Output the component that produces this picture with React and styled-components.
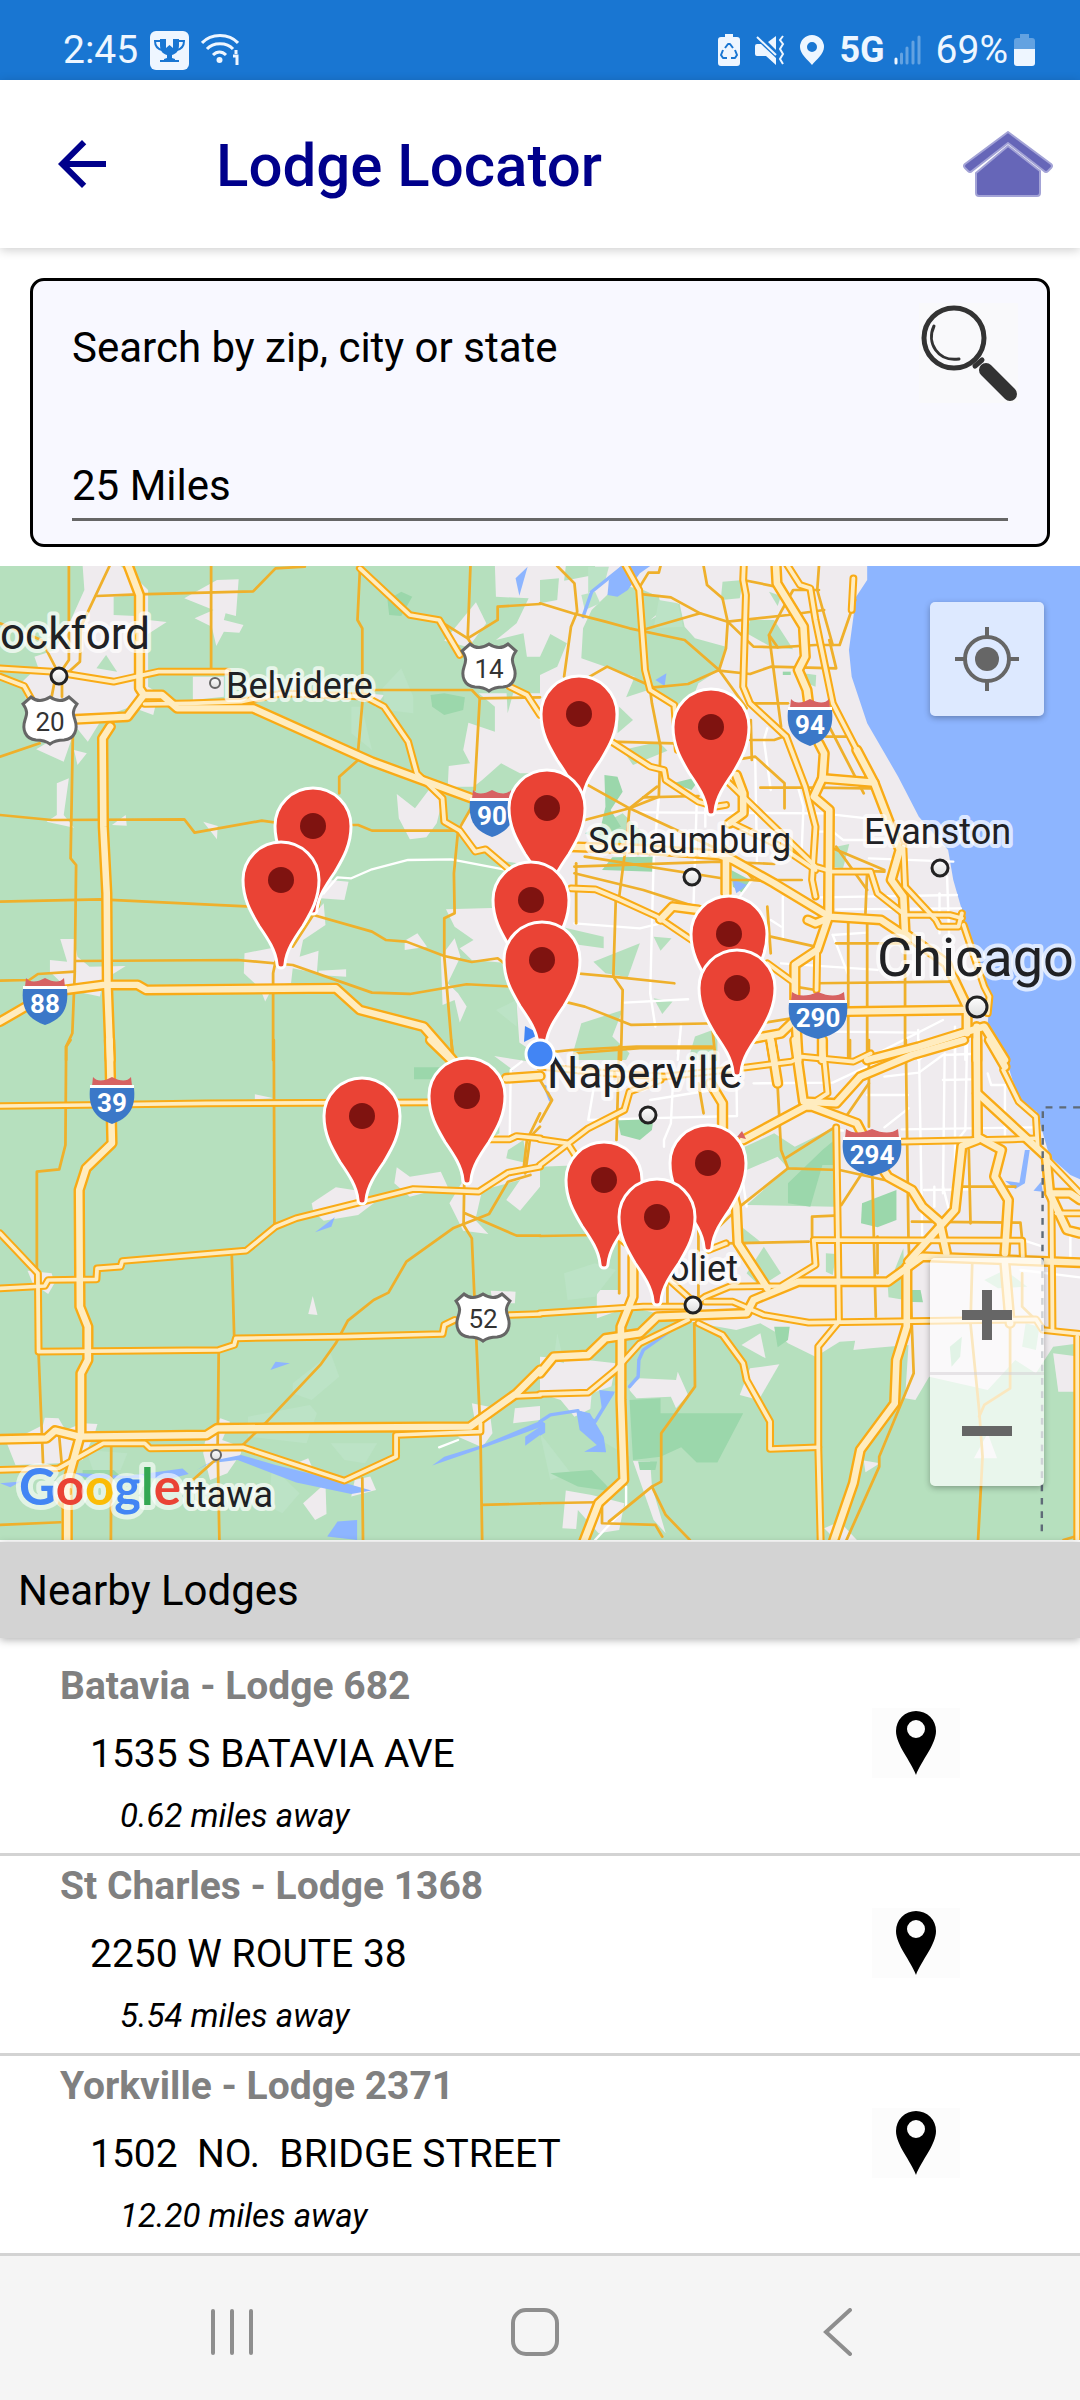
import React from 'react';
import styled, { createGlobalStyle } from 'styled-components';

const GlobalStyle = createGlobalStyle`
  * {
    box-sizing: border-box;
  }
  body {
    margin: 0;
    background: #fff;
    font-family: Roboto, 'Liberation Sans', sans-serif;
    color: #000;
  }
  button,
  input,
  select {
    font: inherit;
    color: inherit;
    margin: 0;
    padding: 0;
    border: 0;
    background: none;
  }
  svg {
    display: block;
  }
`;

const lodges = [
  { id: 682, name: 'Batavia - Lodge 682', street: '1535 S BATAVIA AVE', distance: '0.62 miles away' },
  { id: 1368, name: 'St Charles - Lodge 1368', street: '2250 W ROUTE 38', distance: '5.54 miles away' },
  { id: 2371, name: 'Yorkville - Lodge 2371', street: '1502  NO.  BRIDGE STREET', distance: '12.20 miles away' },
];

// Map geometry, one entry per tile. Points are in tile units.
const tiles = [
  {
    id: 'nw',
    x: 0,
    y: 0,
    urban: [
      '240,18 350,18 400,60 430,90 430,180 484,186 430,222 430,380 460,400 445,465 380,440 300,470 255,545 220,500 185,605 105,568 150,540 80,430 60,370 110,320 100,290 160,270 210,170 245,90',
      '535,115 630,60 693,58 685,168 655,160 650,180 707,195 695,218 650,215 628,258 615,200 565,175 620,150',
      '215,570 252,580 225,615', '165,670 200,655 185,765 215,803 135,785 165,765', '325,795 365,765 368,797', '590,785 632,798 630,838',
      '560,350 650,350 650,410 560,420', '1060,400 1115,405 1090,440',
      '1437,18 1568,18 1568,290 1530,290 1520,220 1440,240 1500,190 1535,115 1440,110', '1382,127 1412,190 1360,262 1290,242',
      '1390,400 1568,400 1568,640 1510,640 1455,610 1400,660 1375,680 1300,680 1303,618 1365,610 1345,570 1360,488 1437,515 1437,440',
      '1152,702 1205,745 1245,690 1285,720 1268,790 1238,832 1190,838 1158,775', '1380,740 1568,800 1568,920 1440,900 1370,850 1330,800',
      '935,958 1012,965 1000,1020 930,1015',
      '710,1180 860,1150 890,1085 940,1030 945,1095 880,1140 870,1190 925,1172 920,1240 850,1225 845,1270 795,1275 770,1325 755,1285 708,1240',
      '925,1232 1005,1228 1005,1250 925,1245', '1175,1142 1212,1120 1240,1160 1175,1170',
      '1295,1048 1568,1040 1568,1490 1508,1448 1500,1330 1480,1210 1370,1200 1335,1165 1375,1140 1320,1100',
      '1280,1190 1320,1135 1337,1190 1300,1270 1330,1300 1355,1340 1335,1388 1320,1320 1285,1335',
      '145,1200 195,1205 175,1137 215,1137 225,1190 260,1220 365,1218 300,1260 290,1310 200,1290 145,1235',
    ],
    park: ['330,110 395,105 395,168 330,165', '280,325 308,285 340,335', '1470,380 1490,400 1474,460'],
    wood: ['1250,405 1290,400 1350,412 1345,450 1290,465 1255,440', '1125,120 1165,95 1197,110 1165,168 1130,165'],
    light: ['1110,385 1165,325 1200,410 1200,460 1120,450', '1020,440 1050,440 1080,570 1020,520', '1440,1350 1500,1320 1500,1400'],
    water: ['1497,55 1532,20 1508,107'],
    street: ['940,1000 980,952 1020,955 1080,928 1185,900 1310,898 1470,930', '938,958 940,1000'],
    minor: [
      '200,18 200,300 180,330 180,410', '318,18 235,200 232,305 200,335', '0,190 120,240 165,330 150,410', '280,108 400,103 735,94 800,25 885,20',
      '613,18 613,330', '1045,30 1038,180 1052,205 1052,430 1040,570', '1040,600 985,650 985,700', '1366,18 1358,235 1445,180 1445,140 1568,132',
      '1280,185 1358,235 1375,262', '1085,390 1370,390 1393,415 1568,412', '1393,415 1378,690', '0,590 115,550',
      '0,765 150,780 535,778 565,818 760,782 850,795 1040,795 1080,812 1330,812', '212,500 205,895 221,915 217,1240 210,1420 192,1460 192,1500',
      '0,1025 290,1018 730,1040', '910,1065 1080,1115 1120,1140 1180,1145 1290,1188 1370,1206 1445,1195 1470,1215',
      '1370,740 1330,812 1318,940 1320,1060 1290,1075 1290,1190 1315,1500', '220,1203 690,1200 850,1215 1080,1298 1190,1302 1355,1273 1490,1280',
      '0,1262 85,1260 110,1242 217,1235', '800,1205 793,1240 793,1500', '930,1000 925,1040 850,1160',
    ],
    route: [
      '0,325 150,335 330,365 460,335 660,335', '420,432 550,430 700,425 820,400 1060,410 1115,440 1185,545 1210,640 1285,715 1290,785 1335,812 1380,875 1410,868 1475,925',
      '1045,25 1190,165 1275,180 1335,285', '1480,380 1530,405 1568,465', '0,350 70,378 95,425',
    ],
    highway: [
      '370,10 405,105 405,385 418,405 470,405 515,445 735,445 1080,605 1370,715', '418,405 370,470 220,478',
      '320,500 298,535 300,800 310,1000 312,1280 320,1500', '0,1385 100,1325 190,1290 300,1275 400,1275 425,1290 975,1285 1045,1350 1230,1400 1315,1500',
    ],
  },
  {
    id: 'ne',
    x: 540,
    y: 0,
    urban: ['0,0 1568,0 1568,1500 0,1500'],
    park: [
      '150,150 200,100 260,80 300,90 345,110 355,150 320,180 405,130 420,200 450,235 540,260 520,330 460,370 430,450 390,450 330,385 250,412 275,350 190,320 120,295 125,205',
      '0,60 55,55 50,120 0,130', '75,18 160,18 157,45 70,62', '30,222 78,250 50,320 0,345 0,290', '530,65 590,60 580,115 525,120',
      '610,180 680,180 735,268 670,260 600,220', '665,95 700,108 690,138', '230,440 270,480 225,520', '240,570 345,545 370,572 270,615',
      '860,860 898,852 880,925 840,920', '60,1100 185,1130 185,1165 80,1150', '155,1205 290,1150 255,1252 190,1240', '330,1130 382,1135 350,1172',
      '120,1390 240,1350 210,1430 260,1480 250,1500 90,1500', '450,1430 515,1405 515,1500 430,1500', '330,1315 385,1325 355,1362', '765,340 802,345 800,380 775,370',
      '130,820 240,760 340,860 240,870',
    ],
    wood: ['187,645 225,650 240,695 205,750 235,800 170,832 190,740', '210,892 330,890 330,935 180,930', '385,670 470,648 440,690', '555,930 610,960 590,1000 560,980', '705,335 728,335 728,345 705,345'],
    light: ['345,120 400,130 415,200 330,205', '120,105 160,95 175,130 130,150', '140,20 200,20 190,60 140,100'],
    water: [
      '950,18 1568,18 1568,1500 1360,1500 1300,1390 1307,1310 1250,1190 1225,1050 1200,960 1185,870 1100,770 1040,650 950,490 905,350 897,270 918,110 950,60',
      '200,60 235,18 320,18 290,40 255,90 225,110 196,105', '335,360 367,340 362,378', '558,958 602,975 570,1000',
    ],
    river: ['235,25 150,95 125,170'],
    street: [
      '660,505 650,540 670,690', '750,685 765,740 760,870', '280,757 820,760 950,775', '625,600 630,910', '345,710 330,900 320,1300 335,1400', '455,730 445,1060',
      '480,730 480,800', '100,1090 290,1105 350,1090', '245,1328 430,1318', '410,1390 400,1500', '800,815 850,815 880,840 1000,840', '955,895 1200,905',
      '810,1012 1210,1005', '860,1048 1222,1045', '1160,1000 1160,1120', '1182,950 1188,1130', '850,1125 950,1118', '850,1125 895,1245', '700,1210 980,1230',
      '980,1480 1170,1380', '830,1415 1100,1418', '1098,1410 1098,1500', '705,1010 705,1140', '615,960 580,1010', '670,1080 700,1100', '1205,1400 1205,1500',
      '1235,1400 1235,1500', '1170,1440 1100,1500',
    ],
    minor: [
      '50,18 100,70 108,155 90,200 70,350', '0,130 95,160 190,185 260,205 420,240 520,330 600,445', '290,212 465,160 380,112 300,103', '465,160 545,185 720,165 825,150',
      '350,18 345,38 315,38 290,80', '475,18 485,75 530,115 545,185 540,265 520,330', '520,332 610,342 670,320 860,325 840,240', '110,370 195,320 330,382 430,372 520,330',
      '545,185 620,260 690,262 800,255 870,255 915,120', '690,262 665,225 700,155 735,90 810,90', '665,225 700,500', '810,18 805,90 850,255',
      '320,390 325,430 350,560 345,710 260,745', '200,545 390,550', '610,430 720,430', '610,540 680,540 720,525', '575,598 625,590 710,670 710,745', '612,480 615,600',
      '590,60 710,85', '130,670 260,745 510,865', '130,780 260,745 340,680', '300,712 460,708', '640,683 800,683 960,685', '840,500 940,700', '830,530 890,530',
      '100,920 520,905 680,912', '100,940 300,990 450,1040', '230,1010 250,850 260,745', '105,910 105,1090', '220,1020 213,1250 240,1290 235,1500', '0,1230 210,1250 390,1270',
      '70,1325 130,1340 265,1395 520,1390', '100,1480 290,1465 500,1465', '500,1400 510,1500', '130,890 560,960 760,960', '530,850 620,960 700,970', '860,860 950,990',
      '950,930 945,1060', '800,1270 1200,1265', '895,1090 895,1500', '950,1080 950,1500', '1060,1150 1060,1500', '670,1130 800,1160', '860,1150 1120,1150', '740,1280 800,1290',
      '640,1390 760,1370', '660,1040 670,1180', '850,865 1000,930', '1000,935 850,930',
    ],
    route: [
      '245,10 288,90 305,330 320,390 390,435 400,570', '592,10 590,60 598,105 590,380 610,430 715,530 770,680 800,800 790,960 800,1010', '715,10 755,75 785,85 800,180 850,430 920,570',
      '910,55 905,150', '200,540 320,620 360,630 365,660 460,725 510,740 540,735', '540,660 620,740 800,920 850,935 960,935 980,1000 1060,1065 1190,1065 1225,1075',
      '90,985 160,988 230,1018 340,1070 440,1140', '560,790 700,860 800,930', '660,1210 740,1270', '1055,860 1060,980 1150,1080 1160,1100 1215,1100 1225,1060', '805,1160 803,1290',
      '1230,1095 1290,1280 1305,1310 1300,1360',
    ],
    highway: [
      '685,10 688,70 765,200 770,290 750,330 775,390 780,430', '810,550 825,580 820,655 795,710 840,750 838,1070 805,1170 740,1215 740,1330 750,1500', '820,655 970,668 920,570',
      '970,668 1045,870 1020,960 1055,1010 1060,1120 1180,1210 1240,1340 1240,1420', '85,860 300,868 520,885 560,900 680,970 840,1070 990,1080 1070,1135', '540,890 540,1000',
      '350,1078 385,1040 460,1050', '778,1080 800,1090 835,1075', '570,645 590,700 590,760 550,790', '895,1355 1230,1350', '600,1440 700,1420 740,1380',
      '950,1500 1100,1460 1240,1415 1290,1400 1350,1500', '1268,1400 1268,1500', '670,1440 680,1500', '820,1440 820,1500',
    ],
  },
  {
    id: 'sw',
    x: 0,
    y: 480,
    urban: [
      '905,490 975,442 1060,455 1085,490 1040,525 940,542 910,515', '1152,382 1190,410 1280,395 1300,440 1190,470 1145,430',
      '1305,490 1340,430 1330,330 1420,300 1450,280 1450,130 1490,90 1435,48 1568,70 1568,440 1510,512 1470,480 1510,420 1400,450 1380,540 1418,582 1345,572',
      '895,822 908,768 922,825', '1425,752 1497,755 1495,790 1430,790', '740,163 795,175 740,178', '80,692 150,700 158,730 140,762 95,730',
      '20,1210 125,1155 130,1133 170,1135 190,1170 240,1150 283,1152 275,1180 240,1260 170,1270 45,1275',
      '595,1205 640,1135 668,1145 645,1200 700,1220 700,1240 660,1300 610,1320 590,1240', '880,1390 945,1330 948,1422 915,1440', '860,1270 895,1255 910,1290 870,1290',
      '1030,1320 1075,1310 1092,1350 1020,1370', '1370,1090 1420,1100 1430,1180 1400,1222 1330,1190 1380,1150', '1495,1105 1568,1098 1568,1140 1490,1150',
    ],
    park: ['1475,330 1520,300 1530,370 1470,355'],
    wood: ['1202,82 1300,82 1280,118 1202,118', '240,1290 330,1290 360,1318 240,1320'],
    light: ['850,1030 960,940 985,1010 905,1080 850,1060', '720,1130 900,1095 920,1120 890,1210 720,1190', '250,1230 370,1240 350,1290 270,1290', '790,1280 870,1360 820,1420 780,1400', '960,1210 1095,1210 1060,1270 1000,1260'],
    water: [
      '785,990 800,965 842,970', '915,577 972,532 962,560', '620,1262 700,1245 800,1275 930,1308 1078,1352 1020,1362 860,1328 690,1260 610,1270 570,1290',
      '1255,1277 1290,1250 1400,1215 1568,1143 1568,1162 1400,1225', '1525,1190 1568,1160 1568,1185 1525,1217', '980,1445 1037,1440 1037,1500 950,1490',
      '200,1298 370,1308 530,1286 548,1302 500,1315 260,1315', '0,1330 60,1325 30,1342',
    ],
    street: ['1515,65 1483,90 1480,290', '1275,1222 1330,1200'],
    minor: [
      '205,0 192,20 190,315 172,388 107,395 107,690', '795,0 797,550', '1310,0 1315,40', '673,645 680,890', '112,940 125,1270', '635,940 632,1220 637,1500',
      '1540,405 1475,425 1420,522 1315,565 1180,665 1128,758 1085,780 1010,842 975,910 930,975 770,1150 705,1215', '560,1320 625,1260',
      '1348,430 1346,555 1370,595 1395,1180 1400,1500', '1350,520 1500,587 1568,587', '1052,1315 1054,1500', '323,1210 322,1500', '0,1455 175,1447', '1400,1395 1568,1390',
      '172,1190 180,1280', '1568,220 1530,300 1520,390', '1568,260 1540,290 1525,400', '140,1350 195,1420',
    ],
    route: [
      '0,198 250,195 600,190 1250,187', '0,745 130,738 140,720 280,718 282,685 350,680 355,663 715,632 800,560 860,535 1200,447 1390,455 1475,398 1568,380',
      '0,580 110,700 112,935 635,930 680,915 685,895 1000,890 1285,882 1290,855 1320,840', '1480,825 1568,822', '1410,298 1480,298 1500,288 1568,295',
      '0,1290 170,1285 300,1210 420,1210 435,1225 705,1222 1000,1322 1150,1250 1150,1185 1395,1175 1395,1150', '1500,1068 1568,1065',
    ],
    highway: [
      '318,0 325,310 250,385 230,450 232,800 255,860 255,960 235,1000 235,1180 195,1330 195,1510', '0,1198 135,1195 160,1172 230,1190 600,1185 630,1165 1365,1160 1500,1060 1568,990',
      '1250,0 1310,60', '1470,115 1568,108',
    ],
  },
  {
    id: 'se',
    x: 540,
    y: 480,
    urban: [
      '0,40 1568,40 1568,910 1490,920 1440,1000 1380,960 1300,1050 1130,1010 1090,1080 1060,1075 1070,915 960,925 910,930 915,902 870,905 800,950 720,910 690,880 640,850 570,870 460,850 260,800 165,835 165,750 230,750 230,560 180,560 90,480 130,375 0,380',
      '585,915 640,880 655,955', '0,950 155,962 220,970 200,1080 100,1130 60,1080 0,1060', '255,1045 290,1015 395,1020 400,995 430,1065 395,1105 380,1070 280,1075',
      '270,1263 320,1265 325,1340 365,1480 330,1440', '75,1352 150,1365 245,1390 230,1470 170,1480 110,1410 105,1467 65,1465', '695,973 635,1080 580,1065 610,985',
      '825,1465 870,1445 920,1500 860,1500', '940,1262 987,1270 945,1297', '1260,1255 1300,1180 1327,1255', '1490,940 1568,950 1568,1055 1505,1055',
    ],
    park: [
      '600,495 720,385 690,350 600,390 595,320 680,280 740,320 855,262 855,500', '830,640 860,642 850,705 830,695', '1010,740 1055,625 1060,780 1012,772', '1290,720 1350,690 1415,740 1330,745',
      '585,560 640,605 590,615', '0,480 70,480 160,560 230,640 220,750 60,750 0,760', '650,620 700,700 640,740 600,700', '1410,850 1450,860 1440,930 1400,920',
    ],
    light: ['70,700 160,670 220,690 160,770 80,780', '150,1060 260,1020 260,1250 140,1180', '0,1180 90,1300 30,1320', '50,880 70,970 40,960'],
    wood: [
      '225,240 330,232 325,270 290,300 235,285', '720,430 820,330 855,300 855,375 820,375 785,500 720,490', '935,490 1035,450 1035,540 980,562 932,550', '1055,750 1105,750 1112,787 1055,785',
      '680,860 725,860 720,900 690,922', '260,1080 350,1075 350,1120 590,1120 515,1268 455,1268 410,1222 350,1250 270,1260', '30,1300 150,1290 210,1355 110,1340',
      '285,1265 340,1265 335,1290 290,1290', '1190,920 1225,890 1220,950 1195,980',
    ],
    water: [
      '1330,0 1568,0 1568,418 1540,405 1480,350 1442,215 1390,180 1360,80', '1408,330 1422,330 1408,430 1380,447 1350,422 1392,428', '1433,452 1455,425 1460,455',
      '105,1110 145,1120 185,1190 192,1237 128,1235 165,1215 115,1170', '172,1050 218,1055 180,1110', '0,1140 15,1150 15,1178 0,1187',
    ],
    river: ['415,845 300,930 287,960 285,1010 260,1040', '0,1145 30,1125 110,1112', '120,1120 160,1145 210,1060', '15,140 30,180'],
    street: [
      '570,100 572,228 300,235 140,240 155,150', '388,90 380,250 360,300 360,320', '320,180 500,150', '620,130 850,128 990,60', '950,165 1068,165', '1070,205 1000,262', '1100,0 1110,600',
      '1175,40 1170,460', '1145,440 1145,500', '1170,440 1190,520', '1205,20 1205,420', '1240,0 1235,270 1205,310', '1050,268 1440,262', '1115,450 1250,448', '1170,120 1250,118', '1300,100 1310,135 1350,135 1350,300', '590,430 600,500',
      '1400,600 1460,620', '1395,690 1568,712', '250,1340 250,1400 160,1500', '1000,110 1100,98 1170,45 1250,42', '405,0 400,40', '1540,590 1540,650', '860,270 880,272',
    ],
    minor: [
      '0,40 90,30 280,20 500,20', '230,20 222,300', '0,588 165,585', '460,130 475,220', '690,140 700,330 720,385 870,390 1000,420', '720,385 580,500 490,590', '712,355 855,262',
      '900,0 900,50', '955,0 955,260', '965,410 975,830', '1062,0 1070,600 1085,1000 985,1250 985,1280 890,1500', '935,400 875,495', '1080,545 1395,548 1400,600', '855,527 790,530 790,590',
      '540,610 780,605', '460,570 460,780', '370,730 370,790', '1245,330 1250,550', '1255,670 1250,850 1275,1110 1285,1250 1272,1500', '1400,700 1400,800 1440,840',
      '1275,1130 1290,1095 1365,1045 1365,860', '448,850 450,1040 352,1180 352,1325 325,1340 200,1445', '180,1400 180,1450 335,1455 355,1490', '325,1340 365,1425 435,1500', '0,1390 165,1387', '0,120 35,180 0,245', '230,500 230,760',
      '955,130 885,235', '1210,440 1380,440', '1520,1500 1568,1485', '980,590 980,700',
    ],
    route: [
      '0,80 200,100 360,110 540,90 730,65 760,50 910,65 960,40', '0,375 140,265 245,210 260,155 350,120', '0,298 80,310 105,350', '820,0 835,160 790,190',
      '860,262 865,600 868,845 808,920 808,1220 815,1510', '460,850 530,885 590,970 600,1020 668,1145 668,1227 808,1222', '0,820 300,800 440,800 480,770 550,740 700,738 800,675 795,600 1400,602 1402,650',
      '480,785 560,785 650,825 780,848 1440,838 1460,870 1568,882', '1485,460 1488,870', '1050,305 1370,298 1440,295', '225,590 300,650 440,780', '490,630 540,610',
      '1475,360 1568,460', '1345,90 1390,185 1440,230 1445,320', '0,1062 140,1058 220,990 290,910 430,840', '1560,890 1560,1510', '1500,520 1568,520',
    ],
    highway: [
      '495,130 530,190 530,330 570,500 575,610 660,745', '670,0 690,130', '740,0 765,185 860,190 930,110 1080,45 1230,0',
      '590,300 770,200 790,200 920,250 960,330 1010,410 1080,450 1110,500 1160,545 1180,640', '1268,0 1270,290 1340,330 1320,410 1360,480 1350,640', '1270,300 1225,318 1205,510 1070,665',
      '1270,160 1470,350 1480,460 1530,570 1568,580', '1305,0 1350,80', '1480,460 1540,460 1568,480', '0,1000 40,950 140,945 190,895 290,880 340,830 600,820 620,780 750,725 1010,725 1110,650 1568,668',
      '1065,680 1065,860 1035,960 1030,1090 930,1230 910,1330 850,1510', '270,650 270,770 235,860 235,1080 243,1320 170,1390 125,1510', '1350,670 1365,850',
    ],
    border: ['1568,202 1460,202 1457,1480'],
  },
];

const areaLayers = [
  { key: 'urban', fill: '#efebee' },
  { key: 'park', fill: '#b6e0be' },
  { key: 'light', fill: '#bce3c6' },
  { key: 'wood', fill: '#9bd7ab' },
  { key: 'water', fill: '#8db5ff' },
];

const lineLayers = [
  { key: 'river', stroke: '#8db5ff', width: 10 },
  { key: 'street', stroke: '#ffffff', width: 7 },
  { key: 'minor', stroke: '#efb02b', width: 8 },
  { key: 'route', stroke: '#f9ab16', width: 23 },
  { key: 'highway', stroke: '#f9ab16', width: 33 },
  { key: 'route', stroke: '#ffecbf', width: 11 },
  { key: 'highway', stroke: '#ffecbf', width: 19 },
  { key: 'border', stroke: '#5f6b78', width: 7, dash: '20 20' },
];

const places = [
  { name: 'ockford', x: 0, y: 89, size: 44, dot: [59, 116, 8] },
  { name: 'Belvidere', x: 226, y: 138, size: 36, dot: [215, 123, 5] },
  { name: 'Schaumburg', x: 588, y: 293, size: 36, dot: [692, 317, 8] },
  { name: 'Evanston', x: 864, y: 284, size: 36, dot: [940, 308, 8] },
  { name: 'Chicago', x: 877, y: 416, size: 54, dot: [977, 447, 10] },
  { name: 'Naperville', x: 547, y: 528, size: 44, dot: [648, 555, 8] },
  { name: 'Joliet', x: 738, y: 721, size: 36, anchor: 'end', dot: [693, 745, 8] },
  { name: 'ttawa', x: 273, y: 947, size: 36, anchor: 'end', dot: [216, 895, 5] },
];

const interstates = [
  { label: '88', x: 45, y: 417, wide: 0 },
  { label: '39', x: 112, y: 516, wide: 0 },
  { label: '90', x: 492, y: 229, wide: 0 },
  { label: '94', x: 810, y: 138, wide: 0 },
  { label: '290', x: 818, y: 431, wide: 7 },
  { label: '294', x: 872, y: 568, wide: 7 },
];

const usRoutes = [
  { label: '20', x: 50, y: 135 },
  { label: '14', x: 489, y: 82 },
  { label: '52', x: 483, y: 732 },
];

const markers = [
  [579, 154], [711, 167], [547, 248], [313, 266], [281, 320], [531, 340], [729, 374],
  [542, 400], [737, 428], [467, 536], [362, 556], [708, 603], [604, 620], [657, 657],
];

const Screen = styled.div`
  min-height: 100vh;
  display: flex;
  flex-direction: column;
  background: #fff;
`;

const StatusBar = styled.div`
  height: 80px;
  padding: 20px 45px 0 63px;
  display: flex;
  align-items: center;
  justify-content: space-between;
  background: #1976d2;
  color: #eef6ff;
`;

const StatusGroup = styled.div`
  display: flex;
  align-items: center;
  gap: ${(props) => props.$gap}px;
`;

const StatusText = styled.span`
  font-size: ${(props) => (props.$bold ? 36 : 39)}px;
  font-weight: ${(props) => (props.$bold ? 700 : 400)};
  line-height: 40px;
`;

const Header = styled.header`
  position: relative;
  z-index: 1;
  height: 168px;
  padding: 0 27px 0 46px;
  display: flex;
  align-items: center;
  background: #fff;
  box-shadow: 0 2px 10px rgba(0, 0, 0, 0.2);
`;

const IconButton = styled.button`
  display: flex;
  align-items: center;
  justify-content: center;
  cursor: pointer;
`;

const Title = styled.h1`
  flex: 1;
  margin: 0 0 0 98px;
  padding-top: 4px;
  font-size: 60px;
  line-height: 72px;
  font-weight: 500;
  color: #00008b;
`;

const SearchPanel = styled.form`
  margin: 30px 30px 19px;
  padding: 22px 29px 23px;
  padding-left: 39px;
  border: 3px solid #000;
  border-radius: 14px;
  background: #f8f8ff;
  font-size: 42px;
`;

const SearchRow = styled.div`
  display: flex;
  align-items: flex-start;
  margin-bottom: 47px;
`;

const SearchInput = styled.input`
  flex: 1;
  min-width: 0;
  height: 88px;
  outline: none;
  &::placeholder {
    color: #000;
    opacity: 1;
  }
`;

const RadiusSelect = styled.select`
  display: block;
  width: calc(100% - 10px);
  height: 71px;
  padding-top: 2px;
  appearance: none;
  border-bottom: 3px solid #666;
  border-radius: 0;
  outline: none;
`;

const MapArea = styled.section`
  position: relative;
  aspect-ratio: 1080 / 974;
  margin-bottom: 2px;
  overflow: hidden;
  background: #b6e0be;
`;

const MapCanvas = styled.svg`
  width: 100%;
  height: 100%;
`;

const MapControls = styled.div`
  position: absolute;
  right: 36px;
  ${(props) => (props.$bottom ? 'bottom: 54px;' : 'top: 36px;')}
  border-radius: 5px;
  overflow: hidden;
  background: rgba(255, 255, 255, 0.7);
  box-shadow: 0 2px 6px rgba(0, 0, 0, 0.3);
`;

const MapButton = styled(IconButton)`
  width: 114px;
  height: 114px;
  & + & {
    border-top: 3px solid rgba(210, 205, 210, 0.5);
  }
`;

const ListHeader = styled.h2`
  position: relative;
  margin: 0;
  padding: 24px 18px 22px;
  font-size: 42px;
  line-height: 50px;
  font-weight: 400;
  background: #d3d3d3;
  box-shadow: 0 2px 8px rgba(0, 0, 0, 0.3);
`;

const LodgeList = styled.ul`
  margin: 0;
  padding: 18px 0 0;
  list-style: none;
`;

const LodgeRow = styled.li`
  display: flex;
  align-items: flex-start;
  padding: 6px 120px 19px 60px;
  border-bottom: 3px solid #d3d3d3;
`;

const LodgeInfo = styled.div`
  flex: 1;
  display: grid;
  gap: 20px;
`;

const LodgeName = styled.h3`
  margin: 0;
  font-size: 39px;
  line-height: 48px;
  font-weight: 700;
  color: #808080;
`;

const LodgeStreet = styled.div`
  padding-left: 30px;
  font-size: 39px;
  line-height: 48px;
  white-space: pre-wrap;
`;

const LodgeDistance = styled.div`
  padding-left: 60px;
  font-size: 33px;
  line-height: 36px;
  font-style: italic;
`;

const PinButton = styled(IconButton)`
  width: 88px;
  height: 70px;
  margin-top: 46px;
  background: #fcfcfc;
`;

const NavBar = styled.nav`
  flex: 1;
  min-height: 144px;
  padding: 8px 90px 0 80px;
  display: grid;
  grid-template-columns: repeat(3, 1fr);
  align-items: center;
  background: #f5f5f5;
`;

function InterstateShield({ label, x, y, wide }) {
  const w = 22 + wide;
  return (
    <g transform={`translate(${x} ${y})`}>
      <path d={`M${-w + 2} 10 L${-w + 3} 1 Q${-w / 2 - 2} 8 0 1 Q${w / 2 + 2} 8 ${w - 3} 1 L${w - 2} 10Z`} fill="#d76262" />
      <path d={`M${-w} 9h${2 * w}v4h${-2 * w}z`} fill="#fff" />
      <path d={`M${-w} 12H${w}C${w + 2} 32 ${w - 5} 42 0 48C${5 - w} 42 ${-w - 2} 32 ${-w} 12Z`} fill="#3b78c8" />
      <text x="0" y="36" textAnchor="middle" fontSize="26" fontWeight="700" fill="#fff">{label}</text>
    </g>
  );
}

function RouteShield({ label, x, y }) {
  return (
    <g transform={`translate(${x} ${y})`}>
      <path
        d="M-19 2C-13 7 -6 6 0 2C6 6 13 7 19 2L27 9C22 16 23 19 25 25C28 34 25 44 14 45C8 45 4 46 0 49C-4 46 -8 45 -14 45C-25 44 -28 34 -25 25C-23 19 -22 16 -27 9Z"
        fill="#fff"
        stroke="#666"
        strokeWidth="3"
      />
      <text x="0" y="36" textAnchor="middle" fontSize="26" fill="#333">{label}</text>
    </g>
  );
}

function Marker({ x, y }) {
  return (
    <g transform={`translate(${x} ${y})`}>
      <path
        d="M-4 84C-5 71 -13 59 -22 46C-29 34 -38 20 -38 0A38 38 0 0 1 38 0C38 20 29 34 22 46C13 59 5 71 4 84A4 4 0 0 1 -4 84Z"
        fill="#ea4335"
        stroke="#fff"
        strokeWidth="3"
      />
      <circle r="13" fill="#7f1310" />
    </g>
  );
}

function LodgeMap() {
  const place = (tile) => `translate(${tile.x} ${tile.y}) scale(0.3444 0.3333)`;
  return (
    <MapCanvas viewBox="0 6 1080 974" preserveAspectRatio="xMidYMid slice" role="img" aria-label="Map of nearby lodges">
      <defs>
        <linearGradient id="town" x1="0" y1="0" x2="0" y2="1">
          <stop offset="0" stopColor="#fff" />
          <stop offset="1" stopColor="#ddd" />
        </linearGradient>
      </defs>
      {areaLayers.map((layer) => (
        <g key={layer.key} fill={layer.fill}>
          {tiles.map((tile) => (
            <g key={tile.id} transform={place(tile)}>
              {(tile[layer.key] || []).map((points) => <polygon key={points} points={points} />)}
            </g>
          ))}
        </g>
      ))}
      {lineLayers.map((layer) => (
        <g
          key={layer.key + layer.width}
          fill="none"
          stroke={layer.stroke}
          strokeWidth={layer.width}
          strokeDasharray={layer.dash}
          strokeLinejoin="round"
          strokeLinecap={layer.dash ? 'butt' : 'round'}
        >
          {tiles.map((tile) => (
            <g key={tile.id} transform={place(tile)}>
              {(tile[layer.key] || []).map((points) => <polyline key={points} points={points} />)}
            </g>
          ))}
        </g>
      ))}
      <path d="M737 577l5 -6 4 8z" fill="#d76262" />
      {interstates.map((shield) => <InterstateShield key={shield.label} {...shield} />)}
      {usRoutes.map((shield) => <RouteShield key={shield.label} {...shield} />)}
      {places.map(({ name, x, y, size, anchor, dot }) => (
        <g key={name}>
          <text
            x={x}
            y={y}
            fontSize={size}
            textAnchor={anchor}
            fill="#202124"
            stroke="#fff"
            strokeOpacity="0.7"
            strokeWidth="8"
            strokeLinejoin="round"
            paintOrder="stroke"
          >
            {name}
          </text>
          <circle cx={dot[0]} cy={dot[1]} r={dot[2]} fill="url(#town)" stroke={dot[2] < 8 ? '#666' : '#222'} strokeWidth={dot[2] < 8 ? 2 : 3} />
        </g>
      ))}
      <path d="M525 466L540 474L524 482Z" fill="#4285f4" />
      {markers.map(([x, y]) => <Marker key={`${x}-${y}`} x={x} y={y} />)}
      <circle cx="540" cy="494" r="14" fill="#4285f4" stroke="#fff" strokeWidth="3" />
      <text
        x="19"
        y="945"
        fontFamily="Lato, sans-serif"
        fontSize="51"
        fontWeight="700"
        stroke="#fff"
        strokeOpacity="0.6"
        strokeWidth="10"
        strokeLinejoin="round"
        paintOrder="stroke"
      >
        <tspan fill="#4285f4">G</tspan>
        <tspan fill="#ea4335">o</tspan>
        <tspan fill="#fbbc05">o</tspan>
        <tspan fill="#4285f4">g</tspan>
        <tspan fill="#34a853">l</tspan>
        <tspan fill="#ea4335">e</tspan>
      </text>
    </MapCanvas>
  );
}

function TrophyIcon() {
  return (
    <svg width="39" height="39" viewBox="0 0 39 39">
      <rect width="39" height="39" rx="6" fill="#eef6ff" />
      <path d="M10 8h6v9l3.500-3 3.500 3V8h6v6c0 6-3 9-7 10v3l3 1v1h4v2H10v-2h4v-1l3-1v-3c-4-1-7-4-7-10z" fill="#1976d2" />
      <path d="M10 10H5c0 6 3 8 7 9M29 10h5c0 6-3 8-7 9" fill="none" stroke="#1976d2" strokeWidth="2" />
    </svg>
  );
}

function WifiIcon() {
  return (
    <svg width="38" height="32" viewBox="0 0 38 32" fill="none" stroke="currentColor" strokeWidth="3">
      <path d="M1 9C10 -1 28 -1 37 9M6 15C12 8 26 8 32 15M12 21c4-4 9-4 13 0" />
      <circle cx="18.500" cy="26" r="3" fill="currentColor" stroke="none" />
      <path d="M32 22h4v9M35 16v4" />
    </svg>
  );
}

function SaverIcon() {
  return (
    <svg width="22" height="32" viewBox="0 0 22 32" fill="currentColor">
      <path d="M7 0h8v3h4a3 3 0 0 1 3 3v23a3 3 0 0 1-3 3H3a3 3 0 0 1-3-3V6a3 3 0 0 1 3-3h4z" />
      <path d="M7 14l3-4h2l3 4M17 16l2 5-2 3h-4M9 24H5l-2-3 2-5" fill="none" stroke="#1976d2" strokeWidth="2" strokeLinejoin="round" />
    </svg>
  );
}

function MuteIcon() {
  return (
    <svg width="30" height="30" viewBox="0 0 30 30">
      <path d="M0 11q0-2 2-2h4l15 14v7l-10-9H2q-2 0-2-2zM13 7l8-6v14z" fill="currentColor" />
      <path d="M2 2l19 18M28 1l-3 4 3 4-3 5 3 5-3 5 3 5" fill="none" stroke="currentColor" strokeWidth="2" />
    </svg>
  );
}

function PlaceIcon() {
  return (
    <svg width="24" height="30" viewBox="0 0 24 30" fill="currentColor">
      <path fillRule="evenodd" d="M12 0a12 12 0 0 1 12 12c0 7-8 13-12 18C8 25 0 19 0 12A12 12 0 0 1 12 0zm0 7a5 5 0 1 0 0 10 5 5 0 0 0 0-10z" />
    </svg>
  );
}

function SignalIcon() {
  return (
    <svg width="27" height="30" viewBox="0 0 27 30" fill="none" stroke="currentColor" strokeWidth="3" strokeLinecap="round">
      <path d="M2 24v4" />
      <path d="M7.500 19v9M13 13v15M19 7v21M25 2v26" opacity="0.350" />
    </svg>
  );
}

function BatteryIcon() {
  return (
    <svg width="21" height="32" viewBox="0 0 21 32" fill="currentColor">
      <path d="M6 0h9v4h3a3 3 0 0 1 3 3v8H0V7a3 3 0 0 1 3-3h3z" opacity="0.350" />
      <path d="M0 15h21v14a3 3 0 0 1-3 3H3a3 3 0 0 1-3-3z" />
    </svg>
  );
}

function SearchIcon() {
  return (
    <svg width="99" height="100" viewBox="0 0 99 100">
      <rect width="99" height="100" fill="#f9f9fb" />
      <g fill="none" stroke="#333" strokeLinecap="round">
        <circle cx="35" cy="35" r="30" strokeWidth="5" />
        <path d="M15 23C7 40 19 59 40 56" strokeWidth="3" />
        <path d="M56 63l7-6" strokeWidth="5" />
        <path d="M67 67L91 91" strokeWidth="14" />
      </g>
    </svg>
  );
}

export default function App() {
  return (
    <Screen>
      <GlobalStyle />
      <StatusBar>
        <StatusGroup $gap={12}>
          <StatusText>2:45</StatusText>
          <TrophyIcon />
          <WifiIcon />
        </StatusGroup>
        <StatusGroup $gap={15}>
          <SaverIcon />
          <MuteIcon />
          <PlaceIcon />
          <StatusGroup $gap={9}>
            <StatusText $bold>5G</StatusText>
            <SignalIcon />
          </StatusGroup>
          <StatusGroup $gap={6}>
            <StatusText>69%</StatusText>
            <BatteryIcon />
          </StatusGroup>
        </StatusGroup>
      </StatusBar>

      <Header>
        <IconButton type="button" aria-label="Back">
          <svg width="72" height="72" viewBox="0 0 24 24" fill="#00008b">
            <path d="M20 11H7.830l5.590-5.590L12 4l-8 8 8 8 1.410-1.410L7.830 13H20v-2z" />
          </svg>
        </IconButton>
        <Title>Lodge Locator</Title>
        <IconButton type="button" aria-label="Home">
          <svg width="90" height="66" viewBox="0 0 90 66" fill="#6666b8" stroke="#a3a3d6" strokeWidth="2" strokeLinejoin="round">
            <path d="M13 42L45 15L77 40V62q0 3-3 3H16q-3 0-3-3z" />
            <path d="M45 1L88 33q2 2 0 4l-3 3q-2 2-4 0L45 12L9 40q-2 2-4 0l-3-3q-2-2 0-4z" />
          </svg>
        </IconButton>
      </Header>

      <SearchPanel onSubmit={(e) => e.preventDefault()}>
        <SearchRow>
          <SearchInput type="text" aria-label="Search by zip, city or state" placeholder="Search by zip, city or state" />
          <IconButton type="submit" aria-label="Search">
            <SearchIcon />
          </IconButton>
        </SearchRow>
        <RadiusSelect aria-label="Search radius" defaultValue="25">
          <option value="10">10 Miles</option>
          <option value="25">25 Miles</option>
          <option value="50">50 Miles</option>
        </RadiusSelect>
      </SearchPanel>

      <MapArea>
        <LodgeMap />
        <MapControls>
          <MapButton type="button" aria-label="My location">
            <svg width="64" height="64" viewBox="0 0 64 64" fill="none" stroke="#666" strokeWidth="4">
              <circle cx="32" cy="32" r="22" />
              <circle cx="32" cy="32" r="12" fill="#666" stroke="none" />
              <path d="M32 0v9M32 55v9M0 32h9M55 32h9" />
            </svg>
          </MapButton>
        </MapControls>
        <MapControls $bottom>
          <MapButton type="button" aria-label="Zoom in">
            <svg width="50" height="50" viewBox="0 0 50 50" stroke="#666" strokeWidth="10">
              <path d="M0 25h50M25 0v50" />
            </svg>
          </MapButton>
          <MapButton type="button" aria-label="Zoom out">
            <svg width="50" height="50" viewBox="0 0 50 50" stroke="#666" strokeWidth="10">
              <path d="M0 25h50" />
            </svg>
          </MapButton>
        </MapControls>
      </MapArea>

      <ListHeader>Nearby Lodges</ListHeader>
      <LodgeList>
        {lodges.map((lodge) => (
          <LodgeRow key={lodge.id}>
            <LodgeInfo>
              <LodgeName>{lodge.name}</LodgeName>
              <LodgeStreet>{lodge.street}</LodgeStreet>
              <LodgeDistance>{lodge.distance}</LodgeDistance>
            </LodgeInfo>
            <PinButton type="button" aria-label={`Show ${lodge.name} on map`}>
              <svg width="40" height="64" viewBox="0 0 40 64">
                <path fillRule="evenodd" d="M20 0A20 20 0 0 1 40 20C40 34 25 50 20 64C15 50 0 34 0 20A20 20 0 0 1 20 0zm0 9a9 9 0 1 0 0 18 9 9 0 0 0 0-18z" />
              </svg>
            </PinButton>
          </LodgeRow>
        ))}
      </LodgeList>

      <NavBar>
        <IconButton type="button" aria-label="Recent apps">
          <svg width="48" height="48" viewBox="0 0 48 48" fill="none" stroke="#8e8e8e" strokeWidth="4" strokeLinecap="round">
            <path d="M5 3v42M24 3v42M43 3v42" />
          </svg>
        </IconButton>
        <IconButton type="button" aria-label="Home screen">
          <svg width="48" height="48" viewBox="0 0 48 48" fill="none" stroke="#8e8e8e" strokeWidth="4">
            <rect x="2" y="2" width="44" height="44" rx="13" />
          </svg>
        </IconButton>
        <IconButton type="button" aria-label="Go back">
          <svg width="48" height="48" viewBox="0 0 48 48" fill="none" stroke="#8e8e8e" strokeWidth="4" strokeLinecap="round">
            <path d="M36 2L12 24L36 46" />
          </svg>
        </IconButton>
      </NavBar>
    </Screen>
  );
}
